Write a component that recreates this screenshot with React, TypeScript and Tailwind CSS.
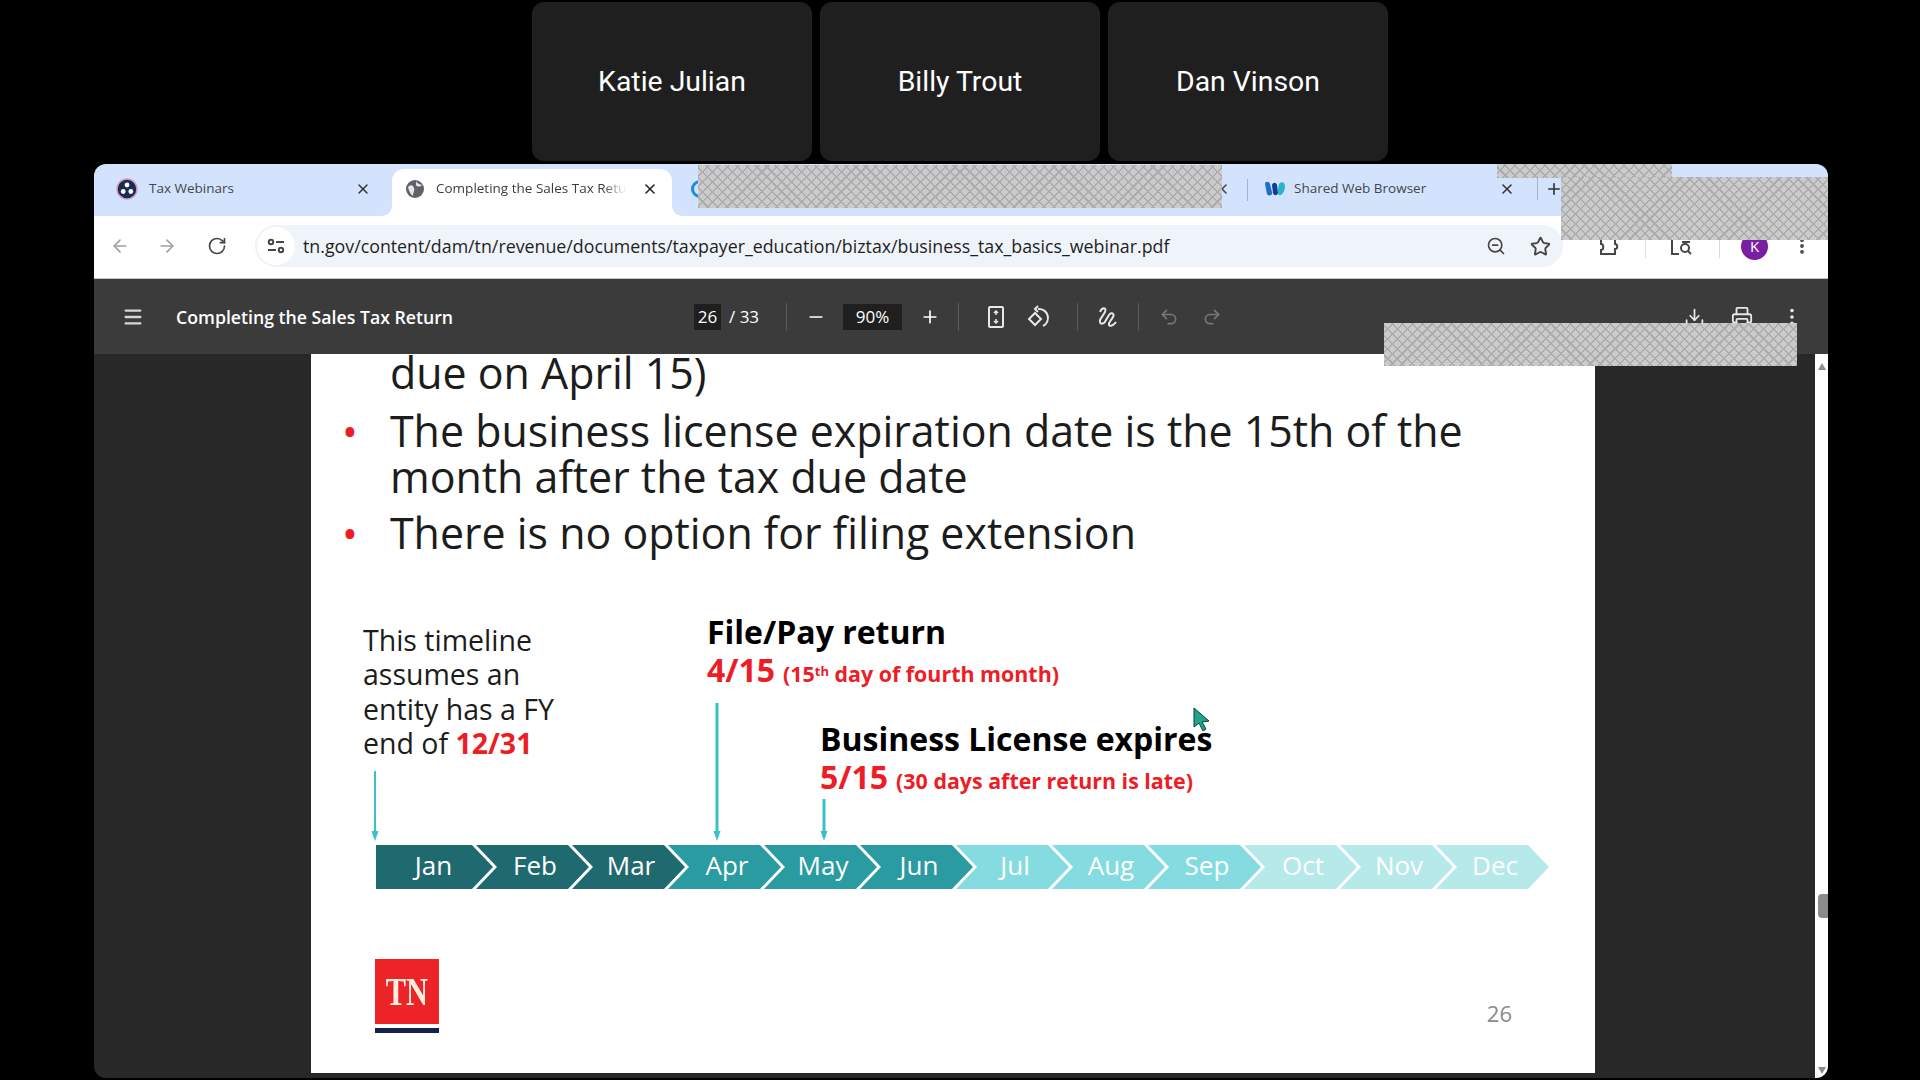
import { ArrowLeft, ArrowRight, RotateCw, ZoomOut, Star, X, Plus, Menu, Minus, Download, Printer, EllipsisVertical, Undo2, Redo2 } from "lucide-react";

const months = [
  { name: "Jan", color: "bg-[#1f6a6f]" },
  { name: "Feb", color: "bg-[#1f6a6f]" },
  { name: "Mar", color: "bg-[#1f6a6f]" },
  { name: "Apr", color: "bg-[#2a9ba0]" },
  { name: "May", color: "bg-[#2a9ba0]" },
  { name: "Jun", color: "bg-[#2a9ba0]" },
  { name: "Jul", color: "bg-[#84dce1]" },
  { name: "Aug", color: "bg-[#84dce1]" },
  { name: "Sep", color: "bg-[#84dce1]" },
  { name: "Oct", color: "bg-[#b6e9e9]" },
  { name: "Nov", color: "bg-[#b6e9e9]" },
  { name: "Dec", color: "bg-[#b6e9e9]" },
];

const hatch =
  "absolute bg-[#cbcbcb] bg-[image:repeating-linear-gradient(45deg,#adadad_0,#adadad_1.5px,transparent_1.5px,transparent_7px),repeating-linear-gradient(-45deg,#adadad_0,#adadad_1.5px,transparent_1.5px,transparent_7px)]";

function Tile({ name }: { name: string }) {
  return (
    <div className="w-[280px] h-[159px] pt-[1px] rounded-xl bg-[#1f1f1f] flex items-center justify-center text-white text-[28.4px] font-['Roboto',sans-serif]">
      {name}
    </div>
  );
}

function Sep() {
  return <div className="w-px h-7 bg-[#5a5a5a]" />;
}

function DownArrow({ height, thin }: { height: number; thin?: boolean }) {
  return (
    <svg width="12" height={height} className="block">
      <line x1="6" y1="0" x2="6" y2={height - 6} stroke="#36c2c6" strokeWidth={thin ? 2 : 3} />
      <path d={`M2.5 ${height - 10} L9.5 ${height - 10} L6 ${height} Z`} fill="#36c2c6" />
    </svg>
  );
}

function Bullet({ children }: { children: React.ReactNode }) {
  return (
    <div className="flex">
      <span className="w-[48px] -ml-[8px] text-[#ee1c25] text-[42px] leading-[46px]">•</span>
      <div>{children}</div>
    </div>
  );
}

export default function App() {
  return (
    <div className="w-[1920px] h-[1080px] bg-black overflow-hidden relative font-['Open_Sans',sans-serif]">
      {/* Participant tiles */}
      <div className="flex justify-center gap-2 pt-[2px] h-[164px]">
        <Tile name="Katie Julian" />
        <Tile name="Billy Trout" />
        <Tile name="Dan Vinson" />
      </div>

      {/* Browser window */}
      <div className="ml-[94px] w-[1734px] h-[914px] rounded-xl overflow-hidden bg-[#282828] flex flex-col">
        {/* Tab strip */}
        <div className="h-[52px] bg-[#d3e3fd] flex items-end pl-[22px] shrink-0">
          <div className="w-[276px] h-[47px] pb-[8px] flex items-center text-[13.5px] text-[#444746] whitespace-nowrap">
            <svg width="22" height="22" viewBox="0 0 22 22" className="mr-[11px] shrink-0">
              <circle cx="11" cy="11" r="10" fill="#1d2a55" stroke="#d59ab8" strokeWidth="1.5" />
              <circle cx="11" cy="7" r="2.4" fill="#fff" />
              <circle cx="7.2" cy="13.5" r="2.4" fill="#fff" />
              <circle cx="14.8" cy="13.5" r="2.4" fill="#fff" />
            </svg>
            <span>Tax Webinars</span>
            <X size={16} strokeWidth={2.2} className="ml-auto mr-[21px] text-[#333]" />
          </div>
          <div className="relative w-[280px] h-[47px] pb-[8px] rounded-t-xl bg-white flex items-center pl-[13px] text-[13.5px] text-[#3c3c3c]">
            <span className="absolute -left-[10px] bottom-0 w-[10px] h-[10px] bg-[radial-gradient(circle_at_0_0,transparent_9.5px,white_10px)]" />
            <span className="absolute -right-[10px] bottom-0 w-[10px] h-[10px] bg-[radial-gradient(circle_at_100%_0,transparent_9.5px,white_10px)]" />
            <svg width="20" height="20" viewBox="0 0 20 20" className="mr-[11px] shrink-0">
              <circle cx="10" cy="10" r="9" fill="#5f6368" />
              <path d="M3 8 C6 5 8 6 9 9 C10 12 8 13 8 17 C5 15 4 12 3 8 Z M11 2 C12 5 15 5 17 6 C15 8 12 8 11 6 Z" fill="#e3e5e8" />
            </svg>
            <span className="w-[190px] overflow-hidden whitespace-nowrap [mask-image:linear-gradient(to_right,black_88%,transparent)]">Completing the Sales Tax Return</span>
            <X size={16} strokeWidth={2.4} className="ml-[16px] text-[#222]" />
          </div>
          <div className="w-[575px] h-[47px] pb-[8px] flex items-center pl-[19px]">
            <span className="w-[18px] h-[18px] rounded-full border-[3px] border-[#1a8fd8]" />
            <X size={16} strokeWidth={2.4} className="ml-auto mr-[17px] text-[#444]" />
          </div>
          <div className="w-px h-[22px] mb-[15px] bg-[#a8b4c8]" />
          <div className="w-[330px] shrink-0 h-[47px] pb-[8px] flex items-center pl-[16px] text-[13.5px] text-[#444746] whitespace-nowrap">
            <svg width="22" height="18" viewBox="0 0 22 18" className="mr-[8px] shrink-0">
              <path d="M1 4 C1 1 5 1 6 4 L8 12 C9 15 5 17 3 14 Z" fill="#1c6dd0" />
              <path d="M8 5 C9 2 12 2 13 5 L14 13 C13 16 10 16 9 13 Z" fill="#0f3f8f" />
              <path d="M15 4 C17 1 21 2 21 6 C21 11 18 16 15 15 C13 14 14 8 15 4 Z" fill="#27b5c9" />
            </svg>
            <span className="w-[137px] shrink-0">Shared Web Browser</span>
            <X size={16} strokeWidth={2.4} className="ml-[68px] shrink-0 text-[#333]" />
            <div className="w-px h-[22px] ml-[22px] shrink-0 bg-[#a8b4c8]" />
            <Plus size={18} strokeWidth={2.2} className="ml-[7px] shrink-0 text-[#333]" />
          </div>
        </div>

        {/* Address bar */}
        <div className="h-[63px] pb-[2px] bg-white flex items-center border-b border-[#c7c7c7] shrink-0 text-[#474747]">
          <ArrowLeft size={20} className="ml-[16px] text-[#a0a0a0]" />
          <ArrowRight size={20} className="ml-[27px] text-[#a0a0a0]" />
          <RotateCw size={20} className="ml-[30px] text-[#474747]" />
          <div className="ml-[28px] w-[1308px] h-[42px] rounded-full bg-[#eff3fa] flex items-center">
            <span className="ml-[2px] w-[38px] h-[38px] rounded-full bg-white flex items-center justify-center">
              <svg width="20" height="20" viewBox="0 0 20 20" fill="none" stroke="#474747" strokeWidth="2">
                <circle cx="5" cy="6" r="2.2" />
                <path d="M10 6 H18 M2 14 H10" />
                <circle cx="15" cy="14" r="2.2" />
              </svg>
            </span>
            <span className="ml-[8px] text-[17.8px] text-[#1f1f1f] whitespace-nowrap">tn.gov/content/dam/tn/revenue/documents/taxpayer_education/biztax/business_tax_basics_webinar.pdf</span>
            <ZoomOut size={20} className="ml-auto mr-[24px]" />
            <Star size={21} strokeWidth={2.2} className="mr-[12px]" />
          </div>
          <svg width="22" height="22" viewBox="0 0 22 22" fill="none" stroke="#474747" strokeWidth="2" className="ml-[35px]">
            <path d="M3 4 H7 C7 1 12 1 12 4 H17 V9 C20 9 20 14 17 14 V19 H3 V15 C6 15 6 9 3 9 Z" />
          </svg>
          <div className="w-px h-[24px] ml-[25px] bg-[#dcdcdc]" />
          <svg width="24" height="24" viewBox="0 0 24 24" fill="none" stroke="#474747" strokeWidth="2" className="ml-[24px]">
            <path d="M2 4 V20 H9" />
            <circle cx="15" cy="14" r="4" />
            <path d="M18 17 L21 20 M12 5 H20 M12 8 H20" />
          </svg>
          <div className="w-px h-[24px] ml-[25px] bg-[#dcdcdc]" />
          <span className="ml-[21px] w-[27px] h-[27px] rounded-full bg-[#7b1fa2] text-white text-[15px] flex items-center justify-center">K</span>
          <EllipsisVertical size={20} strokeWidth={2.6} className="ml-[24px]" />
        </div>

        {/* PDF toolbar */}
        <div className="h-[75px] pt-[1px] bg-[#3b3b3b] flex items-center text-white shrink-0 pl-[28px]">
          <Menu size={22} strokeWidth={2.5} className="text-[#d8d8d8]" />
          <span className="ml-[32px] w-[518px] text-[17.7px] font-semibold whitespace-nowrap">Completing the Sales Tax Return</span>
          <span className="w-[27px] h-[26px] bg-[#1f1f1f] text-[17px] flex items-center justify-center">26</span>
          <span className="ml-[8px] text-[17px] w-[57px]">/ 33</span>
          <Sep />
          <Minus size={20} className="ml-[19px]" />
          <span className="ml-[17px] w-[59px] h-[26px] bg-[#1f1f1f] text-[17px] flex items-center justify-center">90%</span>
          <Plus size={20} className="ml-[18px]" />
          <div className="ml-[18px]"><Sep /></div>
          <svg width="18" height="24" viewBox="0 0 18 24" fill="none" stroke="#e8e8e8" strokeWidth="2" className="ml-[28px]">
            <rect x="2" y="2" width="14" height="20" rx="1" />
            <path d="M9 6 L9 10 M7 8 L9 6 L11 8 M9 14 L9 18 M7 16 L9 18 L11 16" strokeWidth="1.5" />
          </svg>
          <svg width="24" height="24" viewBox="0 0 24 24" fill="none" stroke="#e8e8e8" strokeWidth="2" className="ml-[21px]">
            <path d="M9 8 L3 14 L9 20 L15 14 Z" />
            <path d="M12 4 A9 9 0 0 1 17 21" />
            <path d="M12 1 L9 4 L12 7" />
          </svg>
          <div className="ml-[27px]"><Sep /></div>
          <svg width="24" height="24" viewBox="0 0 24 24" fill="none" stroke="#e8e8e8" strokeWidth="2" className="ml-[17px]">
            <path d="M5 7 C7 2 12 2 10 7 L5 15 C4 20 9 20 11 15 L14 10 C16 7 20 8 18 12 C16 16 13 17 14 20 C15 22 19 20 21 17" />
          </svg>
          <div className="ml-[19px]"><Sep /></div>
          <Undo2 size={20} className="ml-[20px] text-[#777]" />
          <Redo2 size={20} className="ml-[23px] text-[#777]" />
          <Download size={21} className="ml-[462px] text-[#e8e8e8]" />
          <Printer size={22} className="ml-[26px] text-[#e8e8e8]" />
          <EllipsisVertical size={22} className="ml-[28px] text-[#e8e8e8]" />
        </div>

        {/* PDF viewer */}
        <div className="flex-1 min-h-0 flex overflow-hidden">
          <div className="w-[217px] shrink-0" />
          <div className="w-[1284px] h-[719px] shrink-0 bg-white overflow-hidden text-black relative">
            {/* Bullets */}
            <div className="pl-[79px] text-[42.9px] leading-[46px] text-[#1c1c1c] whitespace-nowrap">
              <div className="-mt-[4px]">due on April 15)</div>
              <div className="-ml-[40px] mt-[12px]">
                <Bullet>
                  The business license expiration date is the 15th of the
                  <br />
                  month after the tax due date
                </Bullet>
              </div>
              <div className="-ml-[40px] mt-[10px]">
                <Bullet>There is no option for filing extension</Bullet>
              </div>
            </div>

            {/* Annotations */}
            <div className="flex mt-[59px] pl-[52px] h-[226px]">
              <div className="w-[344px] h-full">
                <div className="text-[28.5px] leading-[34.4px] text-[#1c1c1c] mt-[8px] whitespace-nowrap">
                  This timeline
                  <br />
                  assumes an
                  <br />
                  entity has a FY
                  <br />
                  end of <span className="font-bold text-[#ee1c25]">12/31</span>
                </div>
                <div className="mt-[10px] ml-[6px]">
                  <DownArrow height={70} thin />
                </div>
              </div>
              <div className="h-full w-[113px] relative">
                <div className="absolute left-0 -top-[2px] whitespace-nowrap">
                  <div className="text-[32px] leading-[38px] font-bold">File/Pay return</div>
                  <div className="leading-[38px] text-[#ee1c25] font-bold">
                    <span className="text-[32px]">4/15</span>
                    <span className="text-[21.4px] ml-[8px]">
                      (15<sup className="text-[13px]">th</sup> day of fourth month)
                    </span>
                  </div>
                </div>
                <div className="absolute left-[4px] bottom-0">
                  <DownArrow height={138} />
                </div>
              </div>
              <div className="h-full flex-1 relative">
                <div className="absolute left-0 top-[105px] whitespace-nowrap">
                  <div className="text-[32px] leading-[38px] font-bold">Business License expires</div>
                  <div className="leading-[38px] text-[#ee1c25] font-bold">
                    <span className="text-[32px]">5/15</span>
                    <span className="text-[21.4px] ml-[8px]">(30 days after return is late)</span>
                  </div>
                </div>
                <div className="absolute left-[-2px] bottom-0">
                  <DownArrow height={42} />
                </div>
              </div>
            </div>

            {/* Month timeline */}
            <div className="flex ml-[65px] mt-[4px] h-[44px]">
              {months.map((m, i) => (
                <div
                  key={m.name}
                  className={
                    i === 0
                      ? `${m.color} w-[117px] pb-[3px] text-white text-[26px] flex items-center justify-center pr-[2px] [clip-path:polygon(0_0,calc(100%-21px)_0,100%_50%,calc(100%-21px)_100%,0_100%)]`
                      : `${m.color} w-[113px] -ml-[17px] pb-[3px] pl-[5px] text-white text-[26px] flex items-center justify-center [clip-path:polygon(0_0,calc(100%-21px)_0,100%_50%,calc(100%-21px)_100%,0_100%,21px_50%)]`
                  }
                >
                  {m.name}
                </div>
              ))}
            </div>

            {/* Footer */}
            <div className="flex items-start justify-between ml-[64px] mr-[83px] mt-[70px]">
              <div className="w-[64px]">
                <div className="h-[65px] bg-[#ec2327] text-[#ffeedd] flex items-center justify-center text-[40px] font-bold font-['Liberation_Serif',serif]">
                  <span className="inline-block scale-x-[0.76]">TN</span>
                </div>
                <div className="mt-[4px] h-[5px] bg-[#14204f]" />
              </div>
              <span className="mt-[38px] text-[22px] text-[#8a8a8a]">26</span>
            </div>
          </div>
          <div className="w-[220px] shrink-0 bg-[#282828]" />
          <div className="w-[13px] shrink-0 bg-white relative">
            <div className="absolute left-[3px] top-[540px] w-[10px] h-[24px] rounded-l bg-[#8c8c8c]" />
            <div className="absolute left-[3px] top-[9px] w-0 h-0 border-x-[4px] border-x-transparent border-b-[7px] border-b-[#8c8c8c]" />
            <div className="absolute left-[3px] bottom-[4px] w-0 h-0 border-x-[4px] border-x-transparent border-t-[7px] border-t-[#8c8c8c]" />
          </div>
        </div>
      </div>

      {/* Redaction patches */}
      <div className={`${hatch} left-[698px] top-[165px] w-[524px] h-[43px]`} />
      <div className={`${hatch} left-[1497px] top-[164px] w-[175px] h-[14px]`} />
      <div className={`${hatch} left-[1561px] top-[177px] w-[267px] h-[63px]`} />
      <div className={`${hatch} left-[1384px] top-[323px] w-[413px] h-[43px]`} />

      {/* Pointer */}
      <svg width="18" height="26" viewBox="0 0 18 26" className="absolute left-[1193px] top-[707px]">
        <path d="M1 1 L1 20 L6 16 L10 24 L13 22 L9 15 L16 14 Z" fill="#1fa58c" stroke="#0c3b34" strokeWidth="1" />
      </svg>
    </div>
  );
}
